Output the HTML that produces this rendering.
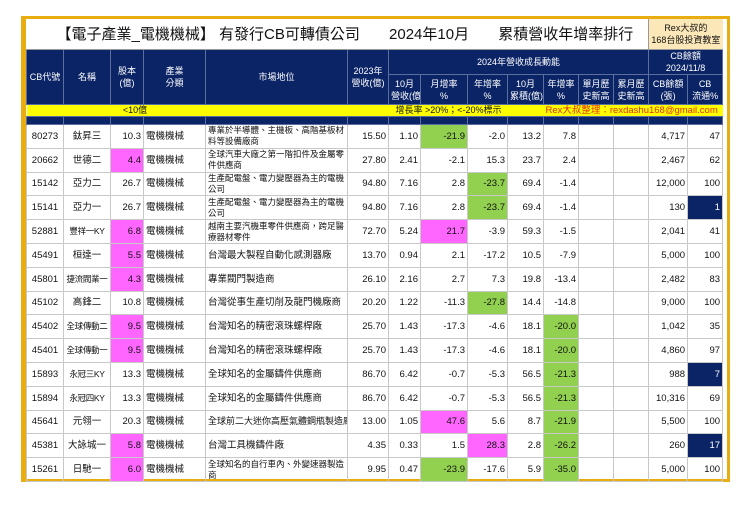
<!DOCTYPE html>
<html><head><meta charset="utf-8"><style>
body{margin:0;background:#fff;width:740px;height:523px;position:relative;overflow:hidden;font-family:"Liberation Sans","Noto Sans CJK TC",sans-serif;}
.frame{position:absolute;left:21px;top:16px;width:701px;height:460px;border:3px solid #e8ad10;border-left-width:5px;border-top-width:3px;}
table{position:absolute;left:26px;top:19px;border-collapse:collapse;table-layout:fixed;width:696px;}
td{padding:0 2px;font-size:9.5px;color:#111;border:1px solid #c8c8c8;overflow:hidden;white-space:nowrap;line-height:11px;}
.title td{border:none;border-bottom:1px solid #999;font-size:15px;height:30px;}
.h td{background:#0b2466;color:#fff;text-align:center;border:1px solid #5a6ea0;font-size:9px;line-height:12px;}
.y td{background:#ffff00;height:11px;font-size:9px;border:none;line-height:11px;}
.s td{background:#0b2466;height:7px;border:1px solid #5a6ea0;}
.d td{height:22.8px;}
.r{text-align:right}.c{text-align:center}
.nm{font-size:8.5px;letter-spacing:-0.3px;padding:0 1px}
.w{white-space:normal;font-size:8.5px;line-height:11px}
.g{background:#92d050}.p{background:#ff66ff}.n{background:#0b2466;color:#fff}
</style></head><body>
<div class="frame"></div>
<table>
<colgroup><col style="width:37px"><col style="width:47px"><col style="width:33px"><col style="width:62px"><col style="width:142px"><col style="width:41px"><col style="width:32px"><col style="width:47px"><col style="width:40px"><col style="width:36px"><col style="width:35px"><col style="width:35px"><col style="width:35px"><col style="width:39px"><col style="width:35px"></colgroup>
<tr class="title"><td colspan="13" style="padding-left:30px">【電子產業_電機機械】 有發行CB可轉債公司 &nbsp; &nbsp; &nbsp; 2024年10月 &nbsp; &nbsp; &nbsp; 累積營收年增率排行</td><td colspan="2" style="background:#fbe7b8;font-size:9px;text-align:center;line-height:12px;border-left:1px solid #999">Rex大叔的<br>168台股投資教室</td></tr>
<tr class="h" style="height:22px"><td rowspan="2">CB代號</td><td rowspan="2">名稱</td><td rowspan="2">股本<br>(億)</td><td rowspan="2">產業<br>分類</td><td rowspan="2">市場地位</td><td rowspan="2">2023年<br>營收(億)</td><td colspan="7">2024年營收成長動能</td><td colspan="2">CB餘額<br>2024/11/8</td></tr>
<tr class="h" style="height:30px"><td>10月<br>營收(億)</td><td>月增率<br>%</td><td>年增率<br>%</td><td>10月<br>累積(億)</td><td>年增率<br>%</td><td>單月歷<br>史新高</td><td>累月歷<br>史新高</td><td>CB餘額<br>(張)</td><td>CB<br>流通%</td></tr>
<tr class="y"><td colspan="4" style="text-align:center;padding-left:40px">&lt;10億</td><td></td><td colspan="5" style="padding-left:48px">增長率 &gt;20%；&lt;-20%標示</td><td colspan="5" style="color:#e03000;text-align:right;padding-right:6px;font-size:9.5px">Rex大叔整理：rexdashu168@gmail.com</td></tr>
<tr class="s"><td></td><td></td><td></td><td></td><td></td><td></td><td></td><td></td><td></td><td></td><td></td><td></td><td></td><td></td><td></td></tr>
<tr class="d"><td class="c">80273</td><td class="c">鈦昇三</td><td class="r">10.3</td><td>電機機械</td><td class="w">專業於半導體、主機板、高階基板材料等設備廠商</td><td class="r">15.50</td><td class="r">1.10</td><td class="r g">-21.9</td><td class="r">-2.0</td><td class="r">13.2</td><td class="r">7.8</td><td></td><td></td><td class="r">4,717</td><td class="r">47</td></tr>
<tr class="d"><td class="c">20662</td><td class="c">世德二</td><td class="r p">4.4</td><td>電機機械</td><td class="w">全球汽車大廠之第一階扣件及金屬零件供應商</td><td class="r">27.80</td><td class="r">2.41</td><td class="r">-2.1</td><td class="r">15.3</td><td class="r">23.7</td><td class="r">2.4</td><td></td><td></td><td class="r">2,467</td><td class="r">62</td></tr>
<tr class="d"><td class="c">15142</td><td class="c">亞力二</td><td class="r">26.7</td><td>電機機械</td><td class="w">生產配電盤、電力變壓器為主的電機公司</td><td class="r">94.80</td><td class="r">7.16</td><td class="r">2.8</td><td class="r g">-23.7</td><td class="r">69.4</td><td class="r">-1.4</td><td></td><td></td><td class="r">12,000</td><td class="r">100</td></tr>
<tr class="d"><td class="c">15141</td><td class="c">亞力一</td><td class="r">26.7</td><td>電機機械</td><td class="w">生產配電盤、電力變壓器為主的電機公司</td><td class="r">94.80</td><td class="r">7.16</td><td class="r">2.8</td><td class="r g">-23.7</td><td class="r">69.4</td><td class="r">-1.4</td><td></td><td></td><td class="r">130</td><td class="r n">1</td></tr>
<tr class="d"><td class="c">52881</td><td class="c nm">豐祥一KY</td><td class="r p">6.8</td><td>電機機械</td><td class="w">越南主要汽機車零件供應商，跨足醫療器材零件</td><td class="r">72.70</td><td class="r">5.24</td><td class="r p">21.7</td><td class="r">-3.9</td><td class="r">59.3</td><td class="r">-1.5</td><td></td><td></td><td class="r">2,041</td><td class="r">41</td></tr>
<tr class="d"><td class="c">45491</td><td class="c">桓達一</td><td class="r p">5.5</td><td>電機機械</td><td>台灣最大製程自動化感測器廠</td><td class="r">13.70</td><td class="r">0.94</td><td class="r">2.1</td><td class="r">-17.2</td><td class="r">10.5</td><td class="r">-7.9</td><td></td><td></td><td class="r">5,000</td><td class="r">100</td></tr>
<tr class="d"><td class="c">45801</td><td class="c nm">捷流閥業一</td><td class="r p">4.3</td><td>電機機械</td><td>專業閥門製造商</td><td class="r">26.10</td><td class="r">2.16</td><td class="r">2.7</td><td class="r">7.3</td><td class="r">19.8</td><td class="r">-13.4</td><td></td><td></td><td class="r">2,482</td><td class="r">83</td></tr>
<tr class="d"><td class="c">45102</td><td class="c">高鋒二</td><td class="r">10.8</td><td>電機機械</td><td>台灣從事生產切削及龍門機廠商</td><td class="r">20.20</td><td class="r">1.22</td><td class="r">-11.3</td><td class="r g">-27.8</td><td class="r">14.4</td><td class="r">-14.8</td><td></td><td></td><td class="r">9,000</td><td class="r">100</td></tr>
<tr class="d"><td class="c">45402</td><td class="c nm">全球傳動二</td><td class="r p">9.5</td><td>電機機械</td><td>台灣知名的精密滾珠螺桿廠</td><td class="r">25.70</td><td class="r">1.43</td><td class="r">-17.3</td><td class="r">-4.6</td><td class="r">18.1</td><td class="r g">-20.0</td><td></td><td></td><td class="r">1,042</td><td class="r">35</td></tr>
<tr class="d"><td class="c">45401</td><td class="c nm">全球傳動一</td><td class="r p">9.5</td><td>電機機械</td><td>台灣知名的精密滾珠螺桿廠</td><td class="r">25.70</td><td class="r">1.43</td><td class="r">-17.3</td><td class="r">-4.6</td><td class="r">18.1</td><td class="r g">-20.0</td><td></td><td></td><td class="r">4,860</td><td class="r">97</td></tr>
<tr class="d"><td class="c">15893</td><td class="c nm">永冠三KY</td><td class="r">13.3</td><td>電機機械</td><td>全球知名的金屬鑄件供應商</td><td class="r">86.70</td><td class="r">6.42</td><td class="r">-0.7</td><td class="r">-5.3</td><td class="r">56.5</td><td class="r g">-21.3</td><td></td><td></td><td class="r">988</td><td class="r n">7</td></tr>
<tr class="d"><td class="c">15894</td><td class="c nm">永冠四KY</td><td class="r">13.3</td><td>電機機械</td><td>全球知名的金屬鑄件供應商</td><td class="r">86.70</td><td class="r">6.42</td><td class="r">-0.7</td><td class="r">-5.3</td><td class="r">56.5</td><td class="r g">-21.3</td><td></td><td></td><td class="r">10,316</td><td class="r">69</td></tr>
<tr class="d"><td class="c">45641</td><td class="c">元翎一</td><td class="r">20.3</td><td>電機機械</td><td style="font-size:9px">全球前二大迷你高壓氣體鋼瓶製造廠</td><td class="r">13.00</td><td class="r">1.05</td><td class="r p">47.6</td><td class="r">5.6</td><td class="r">8.7</td><td class="r g">-21.9</td><td></td><td></td><td class="r">5,500</td><td class="r">100</td></tr>
<tr class="d"><td class="c">45381</td><td class="c">大詠城一</td><td class="r p">5.8</td><td>電機機械</td><td>台灣工具機鑄件廠</td><td class="r">4.35</td><td class="r">0.33</td><td class="r">1.5</td><td class="r p">28.3</td><td class="r">2.8</td><td class="r g">-26.2</td><td></td><td></td><td class="r">260</td><td class="r n">17</td></tr>
<tr class="d"><td class="c">15261</td><td class="c">日馳一</td><td class="r p">6.0</td><td>電機機械</td><td class="w">全球知名的自行車內、外變速器製造商</td><td class="r">9.95</td><td class="r">0.47</td><td class="r g">-23.9</td><td class="r">-17.6</td><td class="r">5.9</td><td class="r g">-35.0</td><td></td><td></td><td class="r">5,000</td><td class="r">100</td></tr>
</table>
</body></html>
